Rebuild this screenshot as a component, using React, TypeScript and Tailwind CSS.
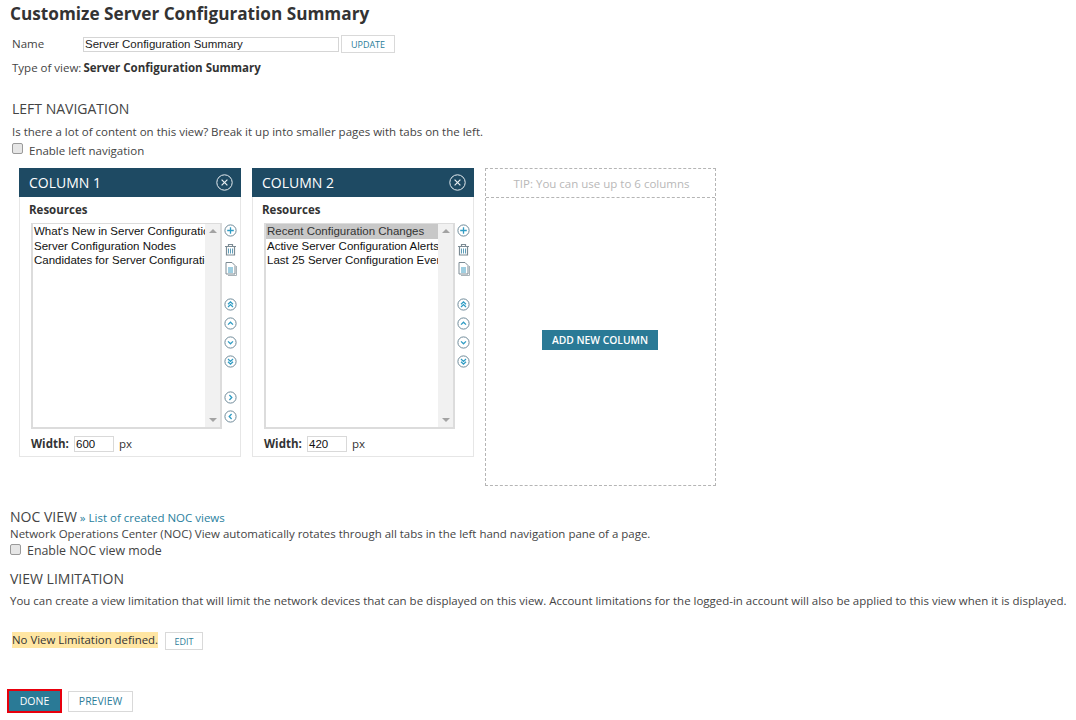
import React from "react";

function CircleIcon({ children }: { children?: React.ReactNode }) {
  return (
    <svg width="13" height="13" viewBox="0 0 13 13" fill="none">
      <circle cx="6.5" cy="6.5" r="5.6" stroke="#6f8a99" strokeWidth="1" />
      <g stroke="#2f9cc4" strokeWidth="1.3" fill="none">{children}</g>
    </svg>
  );
}

const Plus = () => <CircleIcon><path d="M6.5 3.2v6.6M3.2 6.5h6.6" /></CircleIcon>;
const Top = () => <CircleIcon><path d="M4 6.2l2.5-2.4L9 6.2M4 9l2.5-2.4L9 9" /></CircleIcon>;
const Up = () => <CircleIcon><path d="M4 7.6l2.5-2.4L9 7.6" /></CircleIcon>;
const Down = () => <CircleIcon><path d="M4 5.4l2.5 2.4L9 5.4" /></CircleIcon>;
const Bottom = () => <CircleIcon><path d="M4 4l2.5 2.4L9 4M4 6.8l2.5 2.4L9 6.8" /></CircleIcon>;
const Right = () => <CircleIcon><path d="M5.4 4l2.4 2.5L5.4 9" /></CircleIcon>;
const Left = () => <CircleIcon><path d="M7.6 4L5.2 6.5 7.6 9" /></CircleIcon>;

function Trash() {
  return (
    <svg width="13" height="13" viewBox="0 0 13 13" fill="none" stroke="#7c8b94" strokeWidth="1">
      <path d="M1 3.5h11M4.5 3.5V1.5h4v2M2.5 3.5v8.5h8V3.5" strokeWidth="1.2" />
      <path d="M4.5 5.5v5M6.5 5.5v5M8.5 5.5v5" stroke="#5f9db8" />
    </svg>
  );
}

function Copy() {
  return (
    <svg width="12" height="14" viewBox="0 0 12 14" fill="none" stroke="#7c8b94" strokeWidth="1">
      <path d="M3 13.5h8.5V4" stroke="#a9b3b9" />
      <path d="M1 .5h6l3 3v8.5H1z" fill="#fff" />
      <path d="M3 6h5M3 8h5M3 10h5" stroke="#3f9dc2" />
    </svg>
  );
}

function CloseCircle() {
  return (
    <svg width="17" height="17" viewBox="0 0 17 17" fill="none" stroke="#e8eef2" strokeWidth="1">
      <circle cx="8.5" cy="8.5" r="7.7" />
      <path d="M5.6 5.6l5.8 5.8M11.4 5.6l-5.8 5.8" strokeWidth="1.2" />
    </svg>
  );
}

function Checkbox() {
  return <span className="block w-[11px] h-[11px] rounded-[2px] border border-[#9a9a9a] bg-[#e6e6e6] shrink-0" />;
}

function ResourceColumn({ title, items, width, selected }: { title: string; items: string[]; width: string; selected?: boolean }) {
  return (
    <div className="w-[222px] h-[289px] border border-[#e6e6e6] border-t-0 flex flex-col">
      <div className="h-[29px] -mx-px bg-[#1e4a63] text-white flex items-center justify-between pl-[10px] pr-[8px] text-[14px]">
        <span>{title}</span>
        <CloseCircle />
      </div>
      <div className="pl-[9px] mt-[5px] text-[11.5px] leading-[16px] font-bold text-[#333]">Resources</div>
      <div className="flex ml-[11px] mt-[5px]">
        <div className="w-[191px] h-[206px] border-x-2 border-b-2 border-t border-[#dcdcdc] flex bg-white overflow-hidden">
          <div className="w-[172px] overflow-hidden whitespace-nowrap font-['Liberation_Sans',sans-serif] text-[11.5px] leading-[14.5px] text-[#111]">
            {items.map((item, i) => (
              <div key={item} className={`pl-[1px] h-[14.5px] ${selected && i === 0 ? "bg-[#c8c8c8] text-[#333]" : ""}`}>{item}</div>
            ))}
          </div>
          <div className="flex-1 bg-[#f1f1f1] flex flex-col items-center justify-between py-[5px]">
            <span className="w-0 h-0 border-x-[4px] border-x-transparent border-b-[4px] border-b-[#a3a3a3]" />
            <span className="w-0 h-0 border-x-[4px] border-x-transparent border-t-[4px] border-t-[#a3a3a3]" />
          </div>
        </div>
        <div className="ml-[2px] w-[13px] flex flex-col items-center pt-[1px]">
          <Plus />
          <div className="mt-[6px]"><Trash /></div>
          <div className="mt-[6px]"><Copy /></div>
          <div className="mt-[22px]"><Top /></div>
          <div className="mt-[6px]"><Up /></div>
          <div className="mt-[6px]"><Down /></div>
          <div className="mt-[6px]"><Bottom /></div>
          {!selected && <div className="mt-[23px]"><Right /></div>}
          {!selected && <div className="mt-[6px]"><Left /></div>}
        </div>
      </div>
      <div className="flex items-center ml-[11px] mt-[6px] text-[11.5px] text-[#333]">
        <span className="font-bold w-[43px]">Width:</span>
        <span className="w-[40px] h-[16px] border border-[#d9d9d9] font-['Liberation_Sans',sans-serif] text-[11.5px] leading-[14px] pl-[1px] text-[#111]">{width}</span>
        <span className="ml-[5px] text-[11.5px]">px</span>
      </div>
    </div>
  );
}

export default function App() {
  return (
    <div className="w-[1076px] h-[720px] overflow-hidden bg-white font-['Open_Sans',sans-serif] text-[11.5px] text-[#444] relative">
      <h1 className="pl-[10px] pt-[3px] text-[17.2px] leading-[22px] font-bold text-[#333]">Customize Server Configuration Summary</h1>

      <div className="flex items-center pl-[12px] mt-[10px] h-[18px]">
        <span className="w-[71px] text-[11.5px]">Name</span>
        <span className="w-[256px] h-[15px] border border-[#d5d5d5] font-['Liberation_Sans',sans-serif] text-[11.5px] leading-[13px] pl-[1px] text-[#222]">Server Configuration Summary</span>
        <span className="ml-[2px] w-[54px] h-[18px] border border-[#d9d9d9] text-[9px] leading-[17px] text-center text-[#2d7d9a]">UPDATE</span>
      </div>
      <p className="pl-[12px] mt-[7px] leading-[16px]">Type of view:<b className="ml-[2px] text-[#333]">Server Configuration Summary</b></p>

      <h2 className="pl-[12px] mt-[23px] text-[14px] leading-[20px] text-[#444]">LEFT NAVIGATION</h2>
      <p className="pl-[12px] mt-[5px] leading-[16px]">Is there a lot of content on this view? Break it up into smaller pages with tabs on the left.</p>
      <div className="flex items-start pl-[12px] mt-[3px] h-[16px]">
        <Checkbox />
        <span className="ml-[6px] leading-[16px]">Enable left navigation</span>
      </div>

      <div className="flex items-start gap-[11px] pl-[19px] mt-[9px]">
        <ResourceColumn title="COLUMN 1" width="600" items={["What's New in Server Configuration", "Server Configuration Nodes", "Candidates for Server Configuration"]} />
        <ResourceColumn title="COLUMN 2" width="420" selected items={["Recent Configuration Changes", "Active Server Configuration Alerts", "Last 25 Server Configuration Events"]} />
        <div className="w-[231px] h-[318px] border border-dashed border-[#b5b5b5] flex flex-col">
          <div className="h-[29px] border-b border-dashed border-[#b5b5b5] text-center pl-[2px] leading-[29px] text-[#b8b8b8]">TIP: You can use up to 6 columns</div>
          <div className="flex-1 flex items-start justify-center pt-[132px] pr-[1px]">
            <span className="w-[116px] h-[20px] bg-[#2a7a96] text-white text-[10.3px] font-semibold leading-[20px] text-center">ADD NEW COLUMN</span>
          </div>
        </div>
      </div>

      <div className="pl-[10px] mt-[21px] leading-[20px]">
        <span className="text-[14px]">NOC VIEW</span>
        <span className="text-[#2a7f9e]"> » List of created NOC views</span>
      </div>
      <p className="pl-[10px] mt-[-2px] text-[11.47px] leading-[16px]">Network Operations Center (NOC) View automatically rotates through all tabs in the left hand navigation pane of a page.</p>
      <div className="flex items-start pl-[10px] mt-[2px] h-[16px]">
        <Checkbox />
        <span className="ml-[6px] text-[12.4px] leading-[16px] mt-[-1px]">Enable NOC view mode</span>
      </div>

      <h2 className="pl-[10px] mt-[9px] text-[14px] leading-[20px] text-[#444]">VIEW LIMITATION</h2>
      <p className="pl-[10px] mt-[4px] text-[11.47px] leading-[16px] whitespace-nowrap">You can create a view limitation that will limit the network devices that can be displayed on this view. Account limitations for the logged-in account will also be applied to this view when it is displayed.</p>

      <div className="flex items-start pl-[12px] mt-[23px]">
        <span className="h-[16px] bg-[#ffe6a3] text-[11.4px] leading-[16px] text-[#333]">No View Limitation defined.</span>
        <span className="ml-[7px] w-[38px] h-[18px] border border-[#d9d9d9] text-[9px] leading-[17px] text-center text-[#2d7d9a]">EDIT</span>
      </div>

      <div className="flex items-center pl-[7px] mt-[39px]">
        <span className="w-[55px] h-[24px] border-2 border-[#e8000d] bg-[#2a7a96] text-white text-[10.5px] leading-[20px] text-center">DONE</span>
        <span className="ml-[6px] w-[65px] h-[21px] border border-[#d9d9d9] text-[10.5px] leading-[19px] text-center text-[#2d7d9a]">PREVIEW</span>
      </div>
    </div>
  );
}
